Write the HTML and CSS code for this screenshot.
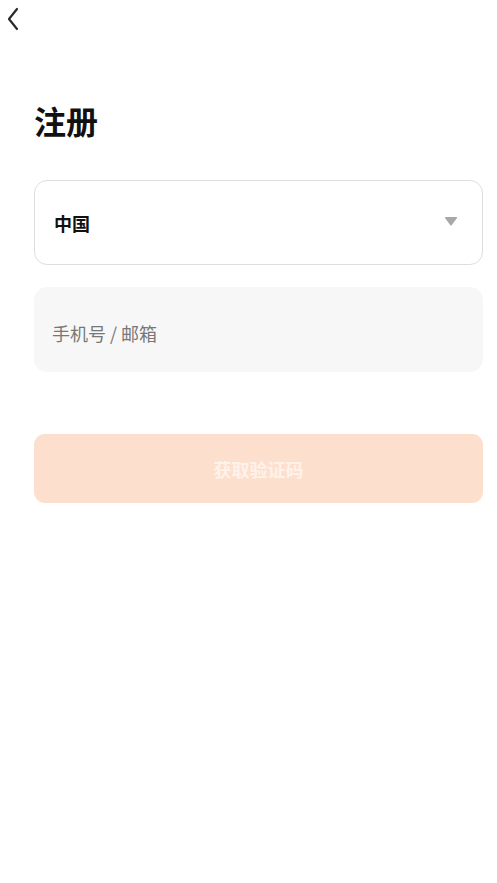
FILE: index.html
```html
<!DOCTYPE html>
<html lang="zh">
<head>
<meta charset="utf-8">
<link rel="stylesheet" href="styles.css">
</head>
<body>
<div class="page">
  <div class="topbar">
    <svg class="back" width="14" height="24" viewBox="0 0 14 24"><path d="M11 2 L3 12 L11 22" fill="none" stroke="#2a2a2a" stroke-width="2.2" stroke-linecap="round" stroke-linejoin="round"/></svg>
  </div>
  <h1 class="title">注册</h1>
  <div class="field select">
    <span class="select-text">中国</span>
    <svg class="caret" width="14" height="10" viewBox="0 0 14 10"><path d="M1.5 1 L12.5 1 Q13.5 1 13 2 L7.8 9 Q7 10 6.2 9 L1 2 Q0.5 1 1.5 1 Z" fill="#a8a8a8"/></svg>
  </div>
  <div class="field input">
    <span class="placeholder">手机号 / 邮箱</span>
  </div>
  <button class="submit">获取验证码</button>
</div>
</body>
</html>
```
FILE: styles.css
```css
html, body {
  margin: 0;
  padding: 0;
  background: #fff;
  font-family: "Noto Sans CJK SC", "Noto Sans", sans-serif;
}
.page {
  width: 497px;
  height: 883px;
  box-sizing: border-box;
  padding: 0 14px 0 34px;
}
.topbar {
  height: 40px;
  margin-left: -28px;
  padding-top: 7px;
  box-sizing: border-box;
}
.back {
  display: block;
}
.title {
  margin: 56px 0 0 0;
  font-size: 32px;
  line-height: 48px;
  font-weight: 700;
  color: #111;
}
.field {
  height: 85px;
  border-radius: 13px;
  box-sizing: border-box;
  display: flex;
  align-items: center;
}
.select {
  margin-top: 36px;
  border: 1px solid #dedede;
  background: #fff;
  padding: 0 24px 0 19px;
  justify-content: space-between;
}
.select-text {
  font-size: 18px;
  font-weight: 700;
  color: #111;
}
.caret {
  display: block;
  margin-bottom: 4px;
}
.input {
  margin-top: 22px;
  background: #f7f7f7;
  padding: 0 18px;
}
.placeholder {
  font-size: 18px;
  color: #777;
  margin-top: 6px;
}
.submit {
  display: block;
  width: 100%;
  height: 69px;
  margin-top: 62px;
  border: none;
  border-radius: 11px;
  background: #fddfcd;
  color: #fff2ea;
  font-family: inherit;
  font-size: 18px;
  font-weight: 700;
}
```
